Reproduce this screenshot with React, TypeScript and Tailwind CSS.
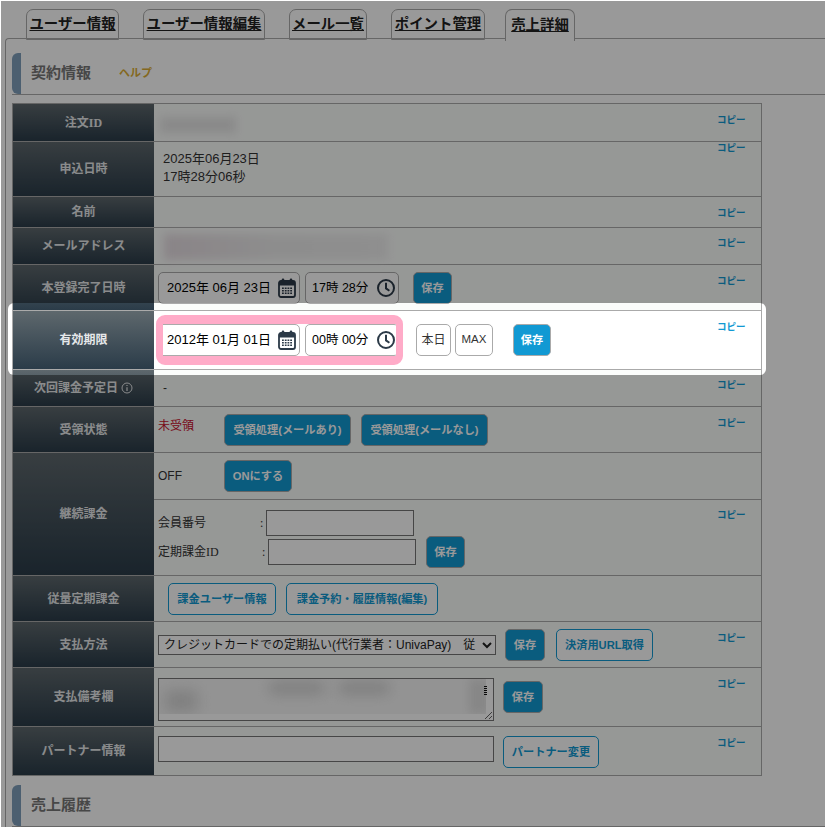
import React from "react";

const sans = "font-['Liberation_Sans','Noto_Sans_CJK_JP',sans-serif]";
const serif = "font-['Liberation_Serif','Noto_Sans_CJK_JP',serif]";

const tabs = [
  { label: "ユーザー情報", width: "w-[93px]" },
  { label: "ユーザー情報編集", width: "w-[122px]" },
  { label: "メール一覧", width: "w-[78px]" },
  { label: "ポイント管理", width: "w-[94px]" },
];

function CalendarIcon() {
  return (
    <svg width="18" height="20" viewBox="0 0 18 20" className="shrink-0">
      <rect x="1" y="3" width="16" height="16" rx="2" fill="none" stroke="#2c3a48" strokeWidth="1.8" />
      <rect x="1" y="3" width="16" height="4.5" fill="#2c3a48" />
      <rect x="3.8" y="0.5" width="2.4" height="4.5" rx="1" fill="#2c3a48" />
      <rect x="11.8" y="0.5" width="2.4" height="4.5" rx="1" fill="#2c3a48" />
      <path d="M4 9.5h1.8v1.5H4zM6.8 9.5h1.8v1.5H6.8zM9.5 9.5h1.8v1.5H9.5zM12.2 9.5H14v1.5h-1.8zM4 12h1.8v1.5H4zM6.8 12h1.8v1.5H6.8zM9.5 12h1.8v1.5H9.5zM12.2 12H14v1.5h-1.8zM4 14.5h1.8V16H4zM6.8 14.5h1.8V16H6.8zM9.5 14.5h1.8V16H9.5zM12.2 14.5H14V16h-1.8z" fill="#2c3a48" />
    </svg>
  );
}

function ClockIcon() {
  return (
    <svg width="18" height="18" viewBox="0 0 18 18" className="shrink-0">
      <circle cx="9" cy="9" r="8" fill="none" stroke="#2c3a48" strokeWidth="2" />
      <path d="M9 3.8V9.4l3.4 2.4" fill="none" stroke="#2c3a48" strokeWidth="2" />
    </svg>
  );
}

function DateInput({ text }: { text: string }) {
  return (
    <div className="flex h-[32px] w-[142px] items-center justify-between rounded-[5px] border border-[#aaa] bg-white pl-[8px] pr-[3px] text-[13px] text-black">
      <span className="whitespace-pre">{text}</span>
      <CalendarIcon />
    </div>
  );
}

function TimeInput({ text }: { text: string }) {
  return (
    <div className="flex h-[32px] w-[94px] items-center justify-between rounded-[5px] border border-[#aaa] bg-white pl-[6px] pr-[3px] text-[12.5px] text-black">
      <span className="whitespace-pre">{text}</span>
      <ClockIcon />
    </div>
  );
}

function Filled({ children, className = "" }: { children: React.ReactNode; className?: string }) {
  return (
    <button className={`flex h-[32px] shrink-0 items-center justify-center rounded-[5px] border border-[#aaa] bg-[#1199d3] text-[11.2px] font-bold text-white ${className}`}>
      {children}
    </button>
  );
}

function Outline({ children, className = "" }: { children: React.ReactNode; className?: string }) {
  return (
    <button className={`flex h-[32px] shrink-0 items-center justify-center rounded-[5px] border border-[#1199d3] bg-white text-[11.2px] font-bold text-[#1199d3] ${className}`}>
      {children}
    </button>
  );
}

function Copy({ className = "" }: { className?: string }) {
  return (
    <div className={`w-[44px] shrink-0 text-[9.5px] font-bold leading-[10px] text-[#1199d3] ${className}`}>コピー</div>
  );
}

function Row({
  label,
  heightClass,
  copyClass,
  bodyClass = "",
  children,
  white = false,
}: {
  label: React.ReactNode;
  heightClass: string;
  copyClass?: string;
  bodyClass?: string;
  children?: React.ReactNode;
  white?: boolean;
}) {
  return (
    <div className={`flex border-b border-[#aaa] ${heightClass} ${white ? "bg-white" : "bg-[#fbfdfb]"}`}>
      <div className={`flex w-[141px] shrink-0 items-center justify-center bg-gradient-to-b from-[#5e686d] to-[#2b3c49] text-[12px] font-bold text-[#e6e8ea] ${serif}`}>
        {label}
      </div>
      <div className={`min-w-0 flex-1 ${bodyClass}`}>{children}</div>
      {copyClass && <Copy className={copyClass} />}
    </div>
  );
}

function SectionHead({ title, help }: { title: string; help?: boolean }) {
  return (
    <div className="flex h-[42px] items-center border-b border-[#aaa]">
      <div className="h-full w-[9px] rounded-l-md bg-[#7f9fbb]" />
      <div className="ml-[10px] text-[15px] font-bold text-[#777]">{title}</div>
      {help && <div className="ml-[28px] text-[11px] font-bold text-[#dcae34]">ヘルプ</div>}
    </div>
  );
}

export default function App() {
  return (
    <div className={`relative h-[827px] w-[825px] overflow-hidden bg-white text-[12px] text-[#333] ${sans}`}>
      <div className="flex items-start gap-[24px] pl-[26px] pt-[9px]">
        {tabs.map((tab) => (
          <div key={tab.label} className={`relative z-[1] flex h-[31px] items-center justify-center whitespace-nowrap rounded-t-[7px] border border-[#aaa] text-[14.4px] font-bold text-[#222] underline ${tab.width}`}>
            {tab.label}
          </div>
        ))}
        <div className="relative z-10 -mb-[1px] -ml-[4px] flex h-[32px] w-[70px] items-center justify-center rounded-t-[7px] border border-b-0 border-[#aaa] bg-white text-[14.4px] font-bold text-[#222] underline">
          売上詳細
        </div>
      </div>

      <div className="relative ml-[5px] -mt-[2px] rounded-tl-[4px] border-l border-t border-[#aaa] pl-[6px] pt-[14px]">
        <SectionHead title="契約情報" help />

        <div className="mt-[8px] w-[750px] border-l border-r border-t border-[#aaa]">
          <Row label="注文ID" heightClass="h-[38px]" copyClass="pt-[11px]">
            <div className="ml-[6px] mt-[13px] h-[16px] w-[76px] bg-[#e6e6e6] blur-[4px]" />
          </Row>
          <Row label="申込日時" heightClass="h-[55px]" copyClass="pt-[1px]" bodyClass="pl-[9px] pt-[8px] text-[13px] leading-[18px]">
            <div>2025年06月23日</div>
            <div>17時28分06秒</div>
          </Row>
          <Row label="名前" heightClass="h-[31px]" copyClass="pt-[11px]" />
          <Row label="メールアドレス" heightClass="h-[37px]" copyClass="pt-[10px]">
            <div className="ml-[10px] mt-[6px] h-[26px] w-[224px] bg-gradient-to-r from-[#e6dde2] via-[#ececec] to-[#eeeeee] blur-[4px]" />
          </Row>
          <Row label="本登録完了日時" heightClass="h-[46px]" copyClass="pt-[11px]" bodyClass="flex pl-[4px] pt-[7px]">
            <DateInput text="2025年 06月 23日" />
            <div className="ml-[5px]"><TimeInput text="17時 28分" /></div>
            <Filled className="ml-[14px] w-[39px]">保存</Filled>
          </Row>
          <Row label="有効期限" heightClass="h-[59px]" copyClass="pt-[11px]" bodyClass="relative flex pl-[4px] pt-[13px]" white>
            <DateInput text="2012年 01月 01日" />
            <div className="ml-[5px]"><TimeInput text="00時 00分" /></div>
            <div className="ml-[17px] flex h-[32px] w-[35px] items-center justify-center rounded-[5px] border border-[#aaa] bg-white text-[#333]">本日</div>
            <div className="ml-[4px] flex h-[32px] w-[38px] items-center justify-center rounded-[5px] border border-[#aaa] bg-white text-[11.5px] text-[#333]">MAX</div>
            <Filled className="ml-[20px] w-[38px]">保存</Filled>
            {/* pink marker drawn over the date and time inputs */}
            <div className="pointer-events-none absolute left-[2px] top-[4px] h-[50px] w-[247px] rounded-[9px] border-[7px] border-t-[9px] border-b-[9px] border-[#ffabc8]" />
          </Row>
          <Row
            label={
              <span className="flex items-center gap-[3px]">
                次回課金予定日
                <svg width="12" height="12" viewBox="0 0 12 12">
                  <circle cx="6" cy="6" r="5" fill="none" stroke="currentColor" strokeWidth="1" />
                  <path d="M6 5.2V9M6 3v1.1" stroke="currentColor" strokeWidth="1.2" />
                </svg>
              </span>
            }
            heightClass="h-[37px]"
            copyClass="pt-[10px]"
            bodyClass="pl-[9px] pt-[9px]"
          >
            -
          </Row>
          <Row label="受領状態" heightClass="h-[46px]" copyClass="pt-[11px]" bodyClass="flex pl-[4px] pt-[7px]">
            <div className="w-[66px] pt-[3px] text-[#c8102e]">未受領</div>
            <Filled className="w-[127px]">受領処理(メールあり)</Filled>
            <Filled className="ml-[10px] w-[127px]">受領処理(メールなし)</Filled>
          </Row>
          <Row label="継続課金" heightClass="h-[123px]" bodyClass="flex flex-col">
            <div className="flex h-[47px] border-b border-[#aaa] pl-[4px] pt-[7px]">
              <div className="w-[66px] pt-[7px]">OFF</div>
              <Filled className="w-[68px]">ONにする</Filled>
            </div>
            <div className="flex flex-1">
              <div className={`flex-1 pl-[4px] pt-[9px] ${serif}`}>
                <div className="flex h-[27px] items-center">
                  <span className="w-[102px]">会員番号</span>
                  <span className="w-[6px]">:</span>
                  <div className="h-[26px] w-[148px] border border-[#767676] bg-white" />
                </div>
                <div className="flex h-[32px] items-center">
                  <span className="w-[104px]">定期課金ID</span>
                  <span className="w-[6px]">:</span>
                  <div className="h-[26px] w-[148px] border border-[#767676] bg-white" />
                  <Filled className="ml-[10px] w-[39px]">保存</Filled>
                </div>
              </div>
              <Copy className="pt-[10px]" />
            </div>
          </Row>
          <Row label="従量定期課金" heightClass="h-[46px]" bodyClass="flex pl-[14px] pt-[7px]">
            <Outline className="w-[108px]">課金ユーザー情報</Outline>
            <Outline className="ml-[10px] w-[152px]">課金予約・履歴情報(編集)</Outline>
          </Row>
          <Row label="支払方法" heightClass="h-[46px]" copyClass="pt-[11px]" bodyClass="flex pl-[4px] pt-[7px]">
            <select className="mt-[6px] h-[20px] w-[338px] border border-[#767676] bg-white pl-[1px] text-[12px] text-[#222]" defaultValue="a">
              <option value="a">クレジットカードでの定期払い(代行業者：UnivaPay)　従</option>
            </select>
            <Filled className="ml-[9px] w-[40px]">保存</Filled>
            <Outline className="ml-[11px] w-[97px]">決済用URL取得</Outline>
          </Row>
          <Row label="支払備考欄" heightClass="h-[59px]" copyClass="pt-[11px]" bodyClass="flex pl-[4px] pt-[10px]">
            <div className="relative h-[43px] w-[336px]">
              <textarea readOnly className="block h-[43px] w-[336px] border border-[#767676] bg-white" />
              {/* blurred note text, sits on the textarea */}
              <div className="pointer-events-none absolute left-[1px] top-[1px] h-[35px] w-[327px] overflow-hidden bg-[#f6f6f6]">
                <div className="absolute left-[6px] top-[12px] h-[20px] w-[32px] bg-[#d0d0d0] blur-[8px]" />
                <div className="absolute left-[110px] top-[3px] h-[12px] w-[55px] bg-[#d0d0d0] blur-[7px]" />
                <div className="absolute left-[180px] top-[3px] h-[12px] w-[50px] bg-[#d0d0d0] blur-[7px]" />
                <div className="absolute left-[310px] top-0 h-[35px] w-[20px] bg-[#e0e0e0] blur-[5px]" />
              </div>
              <div className="absolute right-[7px] top-[8px] h-[9px] w-[3px] bg-[repeating-linear-gradient(#111_0,#111_1px,transparent_1px,transparent_2px)]" />
            </div>
            <Filled className="ml-[9px] mt-[3px] w-[40px]">保存</Filled>
          </Row>
          <Row label="パートナー情報" heightClass="h-[49px]" copyClass="pt-[11px]" bodyClass="flex pl-[4px] pt-[9px]">
            <div className="h-[26px] w-[336px] border border-[#767676] bg-white" />
            <Outline className="ml-[9px] w-[96px]">パートナー変更</Outline>
          </Row>
        </div>

        <div className="mt-[9px]">
          <SectionHead title="売上履歴" />
        </div>
      </div>

      {/* dim layer: one big shadow round the spotlight box */}
      <div className="pointer-events-none absolute bottom-0 left-px right-0 top-px z-20 overflow-hidden">
        <div className="absolute left-[7px] top-[302px] h-[72px] w-[758px] rounded-[6px] shadow-[0_0_0_2000px_rgba(0,0,0,0.4)]" />
      </div>
    </div>
  );
}
